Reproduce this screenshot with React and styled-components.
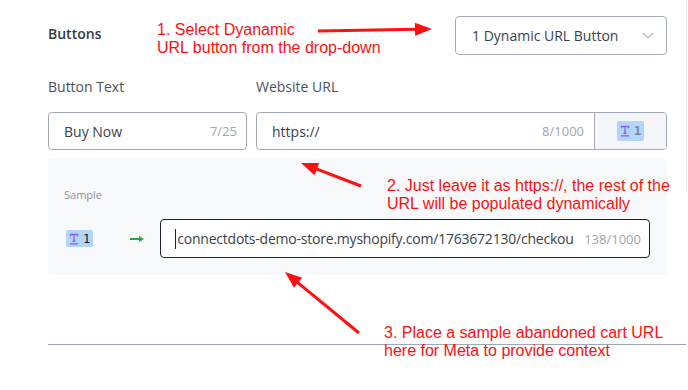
import React from 'react'
import styled, { createGlobalStyle } from 'styled-components'

const GlobalStyle = createGlobalStyle`
  html, body {
    margin: 0;
    padding: 0;
    background: #ffffff;
  }
  body {
    font-family: "Open Sans", "Noto Sans", sans-serif;
    color: #374151;
  }
`

const RED = '#ff1010'

// arrows drawn on top of the screenshot
const annotations = [
  { from: [318, 31], to: [432, 29] },
  { from: [361, 186], to: [301, 163] },
  { from: [359, 333], to: [285, 272] },
]

function arrowShape({ from, to }, len = 17, half = 6.5) {
  const [x1, y1] = from
  const [x2, y2] = to
  const d = Math.hypot(x2 - x1, y2 - y1)
  const ux = (x2 - x1) / d
  const uy = (y2 - y1) / d
  const bx = x2 - ux * len
  const by = y2 - uy * len
  const px = -uy * half
  const py = ux * half
  return {
    line: [x1, y1, bx + ux * 2, by + uy * 2],
    head: `${x2},${y2} ${bx + px},${by + py} ${bx - px},${by - py}`,
  }
}

const App = () => {
  return (
    <>
      <GlobalStyle />
      <Frame>
        <Main>
          <HeaderRow>
            <SectionTitle>Buttons</SectionTitle>
            <Select>
              <span>1 Dynamic URL Button</span>
              <svg width="12" height="7" viewBox="0 0 12 7">
                <polyline points="1,1 6,6 11,1" fill="none" stroke="#b3b8c0" strokeWidth="1.2" />
              </svg>
            </Select>
          </HeaderRow>

          <FieldGrid>
            <FieldLabel>Button Text</FieldLabel>
            <FieldLabel>Website URL</FieldLabel>
            <Input>
              <InputValue>Buy Now</InputValue>
              <Counter>7/25</Counter>
            </Input>
            <Input>
              <InputValue>https://</InputValue>
              <Counter>8/1000</Counter>
              <Addon>
                <VarBadge $tall>
                  <TIcon />
                  <VarNum $muted>1</VarNum>
                </VarBadge>
              </Addon>
            </Input>
          </FieldGrid>

          <SamplePanel>
            <SampleLabel>Sample</SampleLabel>
            <SampleRow>
              <VarBadge>
                <TIcon />
                <VarNum>1</VarNum>
              </VarBadge>
              <GreenArrow width="15" height="8" viewBox="0 0 15 8">
                <line x1="0" y1="4" x2="10" y2="4" stroke="#28a745" strokeWidth="2" />
                <polygon points="9,1 14,4 9,7" fill="#28a745" />
              </GreenArrow>
              <Input $focused>
                <Caret />
                <InputValue $dense>connectdots-demo-store.myshopify.com/1763672130/checkou</InputValue>
                <Counter $tight>138/1000</Counter>
              </Input>
            </SampleRow>
          </SamplePanel>

          <Rule />
        </Main>
        <Edge />

        <Overlay>
          <svg width="688" height="390">
            {annotations.map((a, i) => {
              const s = arrowShape(a)
              return (
                <g key={i}>
                  <line x1={s.line[0]} y1={s.line[1]} x2={s.line[2]} y2={s.line[3]} stroke={RED} strokeWidth="3" />
                  <polygon points={s.head} fill={RED} />
                </g>
              )
            })}
          </svg>
          <Note $top={21} $left={157}>
            1. Select Dyanamic<br />URL button from the drop-down
          </Note>
          <Note $top={177} $left={387}>
            2. Just leave it as https://, the rest of the<br />URL will be populated dynamically
          </Note>
          <Note $top={324} $left={384}>
            3. Place a sample abandoned cart URL<br />here for Meta to provide context
          </Note>
        </Overlay>
      </Frame>
    </>
  )
}

const TIcon = () => (
  <svg width="10" height="12" viewBox="0 0 10 12">
    <path d="M1.5 3.2V1.5h7v1.7M5 1.5v6.8M3.5 8.3h3M1 10.8h8" fill="none" stroke="#8b5cf6" strokeWidth="1.3" />
  </svg>
)

export default App

const Frame = styled.div`
  position: relative;
  width: 688px;
  height: 390px;
  display: flex;
  overflow: hidden;
`

const Main = styled.div`
  width: 686px;
  padding: 16px 19px 0 48px;
  box-sizing: border-box;
`

const Edge = styled.div`
  width: 1px;
  height: 190px;
  background: #eceef1;
`

const HeaderRow = styled.div`
  display: flex;
  align-items: center;
  justify-content: space-between;
`

const SectionTitle = styled.div`
  font-size: 14px;
  font-weight: 600;
  line-height: 20px;
  color: #353b45;
  padding-bottom: 4px;
`

const Select = styled.div`
  width: 212px;
  height: 39px;
  box-sizing: border-box;
  border: 1px solid #a7adb8;
  border-radius: 4px;
  display: flex;
  align-items: center;
  justify-content: space-between;
  padding: 0 12px 0 16px;
  font-size: 14px;
  color: #3b414b;
`

const FieldGrid = styled.div`
  display: grid;
  grid-template-columns: 199px 411px;
  column-gap: 9px;
  row-gap: 15px;
  margin-top: 22px;
`

const FieldLabel = styled.div`
  font-size: 14px;
  line-height: 20px;
  color: #4b515b;
`

const Input = styled.div`
  height: ${p => (p.$focused ? '39px' : '38px')};
  box-sizing: border-box;
  border: 1px solid ${p => (p.$focused ? '#1f2530' : '#a3a9b4')};
  border-radius: 4px;
  display: flex;
  align-items: center;
  padding-left: ${p => (p.$focused ? '14px' : '15px')};
  padding-right: ${p => (p.$focused ? '8px' : '9px')};
  margin-left: ${p => (p.$focused ? '15px' : '0')};
  overflow: hidden;
  min-width: 0;
  flex: 1;
  background: #ffffff;
`

const InputValue = styled.span`
  flex: 1;
  min-width: 0;
  font-size: 14px;
  letter-spacing: ${p => (p.$dense ? '-0.22px' : 'normal')};
  color: #3b414b;
  white-space: nowrap;
`

const Counter = styled.span`
  font-size: 13px;
  color: #a0a6b0;
  margin-left: ${p => (p.$tight ? '3px' : '5px')};
  white-space: nowrap;
  flex-shrink: 0;
`

const Addon = styled.div`
  align-self: stretch;
  width: 71px;
  margin-left: 10px;
  margin-right: -9px;
  border-left: 1px solid #a3a9b4;
  background: #f4f5f9;
  display: flex;
  align-items: center;
  justify-content: center;
`

const VarBadge = styled.span`
  display: inline-flex;
  align-items: center;
  gap: 4px;
  height: ${p => (p.$tall ? '20px' : '17px')};
  padding: 0 3px;
  margin-left: ${p => (p.$tall ? '0' : '2px')};
  background: #b3d4fb;
  border-radius: 2px;
  flex-shrink: 0;
`

const VarNum = styled.span`
  font-family: "DejaVu Sans Mono", "Liberation Mono", monospace;
  font-size: 12px;
  font-weight: ${p => (p.$muted ? 700 : 400)};
  color: ${p => (p.$muted ? '#7b8290' : '#111418')};
`

const GreenArrow = styled.svg`
  margin-left: 37px;
  flex-shrink: 0;
`

const SamplePanel = styled.div`
  margin-top: 9px;
  background: #f8f9fb;
  border-radius: 4px;
  padding: 28px 17px 17px 16px;
`

const SampleLabel = styled.div`
  font-size: 11px;
  line-height: 16px;
  color: #8a929e;
`

const SampleRow = styled.div`
  margin-top: 16px;
  display: flex;
  align-items: center;
`

const Caret = styled.span`
  width: 1px;
  height: 20px;
  background: #1f2530;
  margin-right: 1px;
  flex-shrink: 0;
`

const Rule = styled.div`
  margin-top: 69px;
  margin-right: -19px;
  height: 1px;
  background: #a0a7b3;
`

const Overlay = styled.div`
  position: absolute;
  inset: 0;
  pointer-events: none;

  & > svg {
    position: absolute;
    left: 0;
    top: 0;
  }
`

const Note = styled.div`
  position: absolute;
  top: ${p => p.$top}px;
  left: ${p => p.$left}px;
  font-family: "Liberation Sans", Arial, sans-serif;
  font-size: 16px;
  line-height: 18px;
  color: ${RED};
  white-space: nowrap;
`
